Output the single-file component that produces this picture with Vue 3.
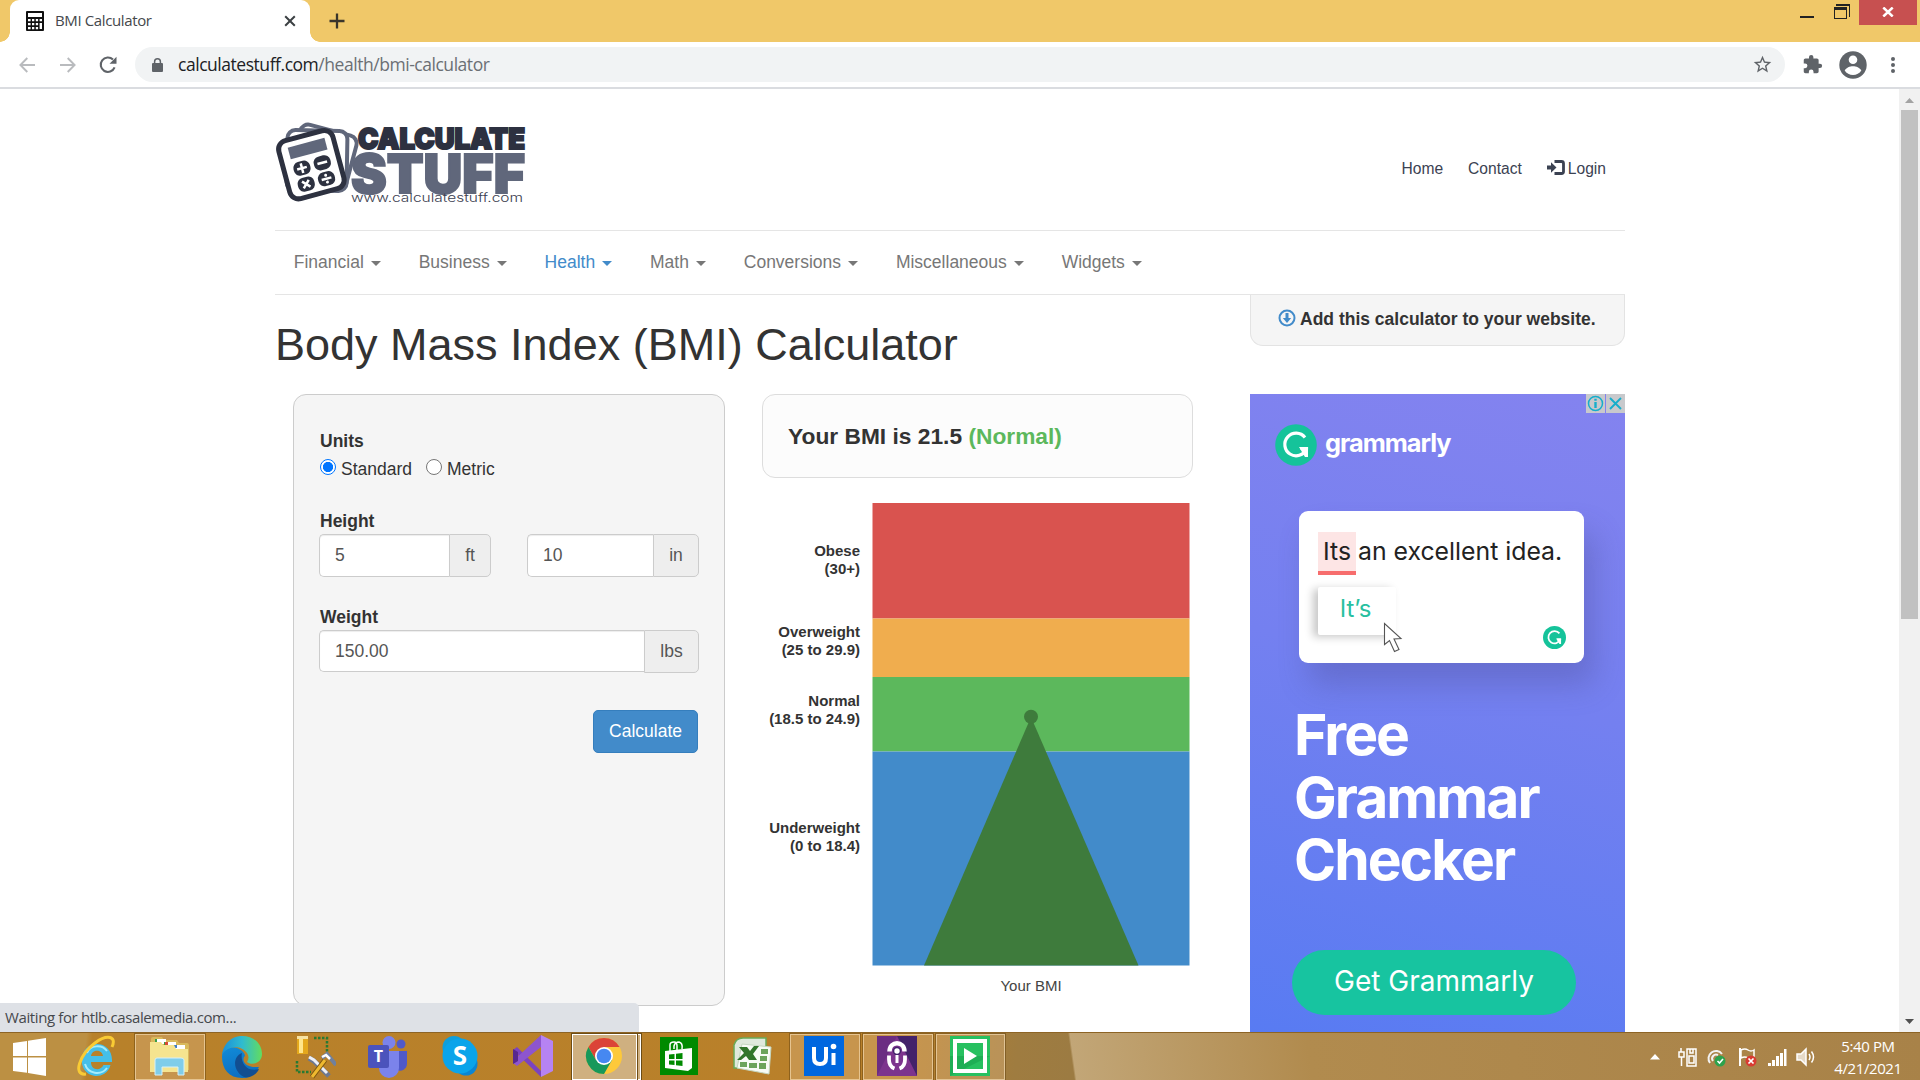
<script setup>
const menu = ['Financial', 'Business', 'Health', 'Math', 'Conversions', 'Miscellaneous', 'Widgets']
const bands = [
  { name: 'Obese', range: '(30+)', top: 13, height: 115.5, color: '#d9534f', label: 66 },
  { name: 'Overweight', range: '(25 to 29.9)', top: 128.5, height: 58.5, color: '#f0ad4e', label: 147 },
  { name: 'Normal', range: '(18.5 to 24.9)', top: 187, height: 74.5, color: '#5cb85c', label: 216 },
  { name: 'Underweight', range: '(0 to 18.4)', top: 261.5, height: 214, color: '#428bca', label: 343 },
]
</script>

<template>
  <div class="screen">
    <header class="tabstrip">
      <div class="tab">
        <svg class="favicon" width="18" height="20" viewBox="0 0 18 20">
          <rect width="18" height="20" rx="1" fill="#111" />
          <rect x="2" y="2" width="14" height="4" fill="#fff" />
          <g fill="#fff">
            <path d="M2 8h2.6v2.2H2zM6 8h2.3v2.2H6zM9.8 8h2.3v2.2H9.8zM13.6 8H16v2.2h-2.4zM2 12h2.6v2.2H2zM6 12h2.3v2.2H6zM9.8 12h2.3v2.2H9.8zM13.6 12H16v6h-2.4zM2 16h2.6v2.2H2zM6 16h2.3v2.2H6zM9.8 16h2.3v2.2H9.8z" />
          </g>
        </svg>
        <span class="tab-title">BMI Calculator</span>
        <svg class="tab-close" width="12" height="12" viewBox="0 0 12 12"><path d="M1.2 1.2l9.6 9.6M10.8 1.2L1.2 10.8" stroke="#3c4043" stroke-width="2" /></svg>
      </div>
      <svg class="newtab" width="16" height="16" viewBox="0 0 16 16"><path d="M8 .5v15M.5 8h15" stroke="#3a352b" stroke-width="2.3" /></svg>
      <div class="win">
        <svg width="14" height="18" viewBox="0 0 14 18"><path d="M0 16h14v2H0z" fill="#222" /></svg>
        <svg width="16" height="16" viewBox="0 0 16 16"><path d="M2 0h14v13h-1V2H2z" fill="#222" /><path d="M0 3h13v12H0zM1 6v8h11V6z" fill="#222" fill-rule="evenodd" /></svg>
        <div class="win-close"><svg width="12" height="10" viewBox="0 0 12 10"><path d="M1.3.5l9.4 9M10.7.5L1.3 9.5" stroke="#fff" stroke-width="2.5" /></svg></div>
      </div>
    </header>

    <div class="toolbar">
      <svg width="16" height="16" viewBox="0 0 16 16" fill="none" stroke="#b9bbbe" stroke-width="1.9"><path d="M16 8H1.5M8.3 1L1.4 8l6.9 7" /></svg>
      <svg class="fwd" width="16" height="16" viewBox="0 0 16 16" fill="none" stroke="#b9bbbe" stroke-width="1.9"><path d="M0 8h14.5M7.7 1l6.9 7-6.9 7" /></svg>
      <svg class="reload" width="18" height="18" viewBox="0 0 18 18"><path d="M15.6 11.4A7.2 7.2 0 1 1 14 3.6" fill="none" stroke="#5f6368" stroke-width="2.1" /><path d="M17.5.8v7h-7z" fill="#5f6368" /></svg>
      <div class="omnibox">
        <svg width="11" height="14" viewBox="0 0 11 14"><rect y="5" width="11" height="9" rx="1" fill="#5f6368" /><path d="M2.6 5.5V3.7a2.9 2.9 0 0 1 5.8 0v1.8" fill="none" stroke="#5f6368" stroke-width="1.5" /></svg>
        <span class="url">calculatestuff.com<em>/health/bmi-calculator</em></span>
        <svg class="star" width="21" height="21" viewBox="0 0 24 24"><path fill="#5f6368" d="M22 9.24l-7.19-.62L12 2 9.19 8.63 2 9.24l5.46 4.73L5.82 21 12 17.27 18.18 21l-1.63-7.03L22 9.24zM12 15.4l-3.76 2.27 1-4.28-3.32-2.88 4.38-.38L12 6.1l1.71 4.04 4.38.38-3.32 2.88 1 4.28L12 15.4z" /></svg>
      </div>
      <svg class="ext" width="21" height="21" viewBox="0 0 24 24"><path fill="#5f6368" d="M20.5 11H19V7c0-1.1-.9-2-2-2h-4V3.5a2.5 2.5 0 0 0-5 0V5H4c-1.1 0-2 .9-2 2v3.8h1.5a2.7 2.7 0 0 1 0 5.4H2V20c0 1.1.9 2 2 2h3.8v-1.5a2.7 2.7 0 0 1 5.4 0V22H17c1.1 0 2-.9 2-2v-4h1.500a2.500 2.500 0 0 0 0-5z" /></svg>
      <svg class="user" width="28" height="28" viewBox="0 0 28 28"><circle cx="14" cy="14" r="13.7" fill="#5f6368" /><circle cx="14" cy="8.800" r="4.300" fill="#fff" /><path d="M5.700 19.500C7 16.800 11 15.300 14 15.300s7 1.500 8.300 4.200C20.500 22.300 17.500 24 14 24s-6.500-1.700-8.300-4.500z" fill="#fff" /></svg>
      <svg class="dots" width="4" height="18" viewBox="0 0 4 18" fill="#5f6368"><circle cx="2" cy="3" r="2" /><circle cx="2" cy="9" r="2" /><circle cx="2" cy="15" r="2" /></svg>
    </div>

    <div class="viewport">
      <main class="page">
        <div class="brandbar">
          <svg class="logo" width="252" height="86" viewBox="0 0 252 86">
            <text x="83" y="29" class="logo-a" textLength="167" lengthAdjust="spacingAndGlyphs">CALCULATE</text>
            <text x="76" y="72.500" class="logo-b" textLength="174" lengthAdjust="spacingAndGlyphs">STUFF</text>
            <text x="76" y="81.500" class="logo-c" textLength="172" lengthAdjust="spacingAndGlyphs">www.calculatestuff.com</text>
            <g fill="#fff" stroke="#60677b" stroke-width="4">
              <rect x="19" y="9" width="58" height="56" rx="8" transform="rotate(15 47 38)" />
              <rect x="12" y="10.500" width="60" height="60" rx="8" transform="rotate(1 42 41)" />
            </g>
            <g transform="translate(1 -1) rotate(-15 36 46)">
              <rect x="7.500" y="15.500" width="56" height="60" rx="9" fill="#fff" stroke="#2d3140" stroke-width="5" />
              <rect x="17" y="23" width="38" height="12" fill="#60677b" />
              <g fill="#2d3140"><rect x="17" y="39.500" width="17" height="14" rx="6" /><rect x="38" y="39.500" width="17" height="14" rx="6" /><rect x="17" y="56" width="17" height="14" rx="6" /><rect x="38" y="56" width="17" height="14" rx="6" /></g>
              <path d="M25.500 41.500v10M20.500 46.500h10M41.500 46.500h10M22 59.500l7 7M29 59.500l-7 7M41.500 63h10" stroke="#fff" stroke-width="2.500" />
              <circle cx="46.500" cy="59.500" r="1.500" fill="#fff" /><circle cx="46.500" cy="66.500" r="1.500" fill="#fff" />
            </g>
          </svg>
          <nav class="links">
            <a>Home</a>
            <a>Contact</a>
            <a><svg width="18" height="16" viewBox="0 0 18 16"><path d="M0 5.500h4V2.200l5.500 5.300L4 12.800V9.500H0z" fill="#3b4252" /><path d="M7.500 1.500h7a2 2 0 0 1 2 2v8a2 2 0 0 1-2 2h-7" fill="none" stroke="#3b4252" stroke-width="2.800" /></svg>Login</a>
          </nav>
        </div>
        <nav class="menu">
          <a v-for="m in menu" :key="m" :class="{ active: m === 'Health' }">{{ m }} <i class="caret"></i></a>
        </nav>
        <div class="titlebar">
          <h1>Body Mass Index (BMI) Calculator</h1>
          <div class="embed">
            <svg width="18" height="18" viewBox="0 0 18 18"><circle cx="9" cy="9" r="7.500" fill="none" stroke="#428bca" stroke-width="2" /><path d="M7.500 4h3v5h2.700L9 14 4.800 9h2.700z" fill="#428bca" /></svg>
            <b>Add this calculator to your website.</b>
          </div>
        </div>
        <div class="columns">
          <section class="form">
            <b class="label">Units</b>
            <div class="radios">
              <i class="radio on"></i><span>Standard</span>
              <i class="radio second"></i><span>Metric</span>
            </div>
            <b class="label height-label">Height</b>
            <div class="fields">
              <div class="group"><div class="input">5</div><div class="addon ft">ft</div></div>
              <div class="group"><div class="input">10</div><div class="addon in">in</div></div>
            </div>
            <b class="label weight-label">Weight</b>
            <div class="group"><div class="input short">150.00</div><div class="addon lbs">lbs</div></div>
            <div class="actions"><button>Calculate</button></div>
          </section>
          <section class="result">
            <div class="verdict">Your BMI is 21.5 <span>(Normal)</span></div>
            <svg class="chart" width="432" height="510" viewBox="0 0 432 510">
              <g v-for="b in bands" :key="b.name">
                <rect x="110.500" :y="b.top" width="317" :height="b.height" :fill="b.color" />
                <text class="band" x="98" :y="b.label">{{ b.name }}</text>
                <text class="band" x="98" :y="b.label + 18">{{ b.range }}</text>
              </g>
              <path d="M269 227L376.500 475.500H162z" fill="#3e7b3c" />
              <circle cx="269" cy="226.700" r="7" fill="#3e7b3c" />
              <text class="axis" x="269" y="501">Your BMI</text>
            </svg>
          </section>
          <aside class="ad">
            <div class="ad-head">
              <svg width="42" height="42" viewBox="0 0 42 42"><circle cx="21" cy="21" r="20.800" fill="#15c39a" /><path d="M30 13.500A11.300 11.300 0 1 0 31.500 25V24.500h-6" fill="none" stroke="#fff" stroke-width="3.200" /><path d="M24 23h9v10h-3z" fill="#fff" /></svg>
              <span>grammarly</span>
              <div class="ad-ctl">
                <i><svg width="17" height="17" viewBox="0 0 17 17"><circle cx="8.500" cy="8.500" r="7" fill="none" stroke="#16aecb" stroke-width="1.500" /><path d="M7.300 7h2.400v6H7.300zM7.300 3.800h2.400v2H7.300z" fill="#16aecb" /></svg></i>
                <i><svg width="13" height="13" viewBox="0 0 13 13"><path d="M1 1l11 11M12 1L1 12" stroke="#16aecb" stroke-width="1.900" /></svg></i>
              </div>
            </div>
            <div class="ad-card">
              <p class="sentence"><span>Its</span> an excellent idea.</p>
              <div class="fix">It’s</div>
              <svg class="cursor" width="20" height="32" viewBox="0 0 20 32"><path d="M1.500 1.500v21l5-4 5 11 4.500-2-5-10.500 7-.5z" fill="#fff" stroke="#555" stroke-width="1.100" /></svg>
              <svg class="badge" width="23" height="23" viewBox="0 0 42 42"><circle cx="21" cy="21" r="21" fill="#15c39a" /><path d="M30 13.500A11.300 11.300 0 1 0 31.500 25V24.500h-6" fill="none" stroke="#fff" stroke-width="3.200" /><path d="M24 23h9v10h-3z" fill="#fff" /></svg>
            </div>
            <div class="ad-title">Free<br />Grammar<br />Checker</div>
            <div class="ad-cta">Get Grammarly</div>
          </aside>
        </div>
      </main>
      <div class="scrollbar">
        <svg width="9" height="5" viewBox="0 0 9 5"><path d="M0 5l4.500-5L9 5z" fill="#a3a3a3" /></svg>
        <div class="thumb"></div>
        <svg class="down" width="9" height="5" viewBox="0 0 9 5"><path d="M0 0l4.500 5L9 0z" fill="#505050" /></svg>
      </div>
      <div class="status">Waiting for htlb.casalemedia.com...</div>
    </div>

    <footer class="taskbar">
      <div class="start"><svg width="33" height="40" viewBox="0 0 33 40"><path d="M0 6l14-2v15H0zM15 3.800L33 1v18H15zM0 20.500h14v15.300L0 34zM15 20.500h18V39l-18-3z" fill="#fff" /></svg></div>
      <div class="task">
        <svg width="38" height="46" viewBox="0 0 38 46"><path d="M33.500 32A14.500 14.500 0 0 1 5 27C5 17 12 11 20 11s15 6 15 16v2H14c0 9 10 9 12.500 3zM14 23h12c-1-7-11-7-12 0z" fill="#45bfe9" fill-rule="evenodd" /><path d="M8 31a12.500 12.500 0 0 0 22 4M10 20c3-8 15-9 20-2" fill="none" stroke="#a5ebfc" stroke-width="2" /><path d="M9 41C-5 43 3 21 18 10 30 1 40 3 35 14" fill="none" stroke="#f9cb34" stroke-width="3" /></svg>
      </div>
      <div class="task open">
        <svg width="42" height="46" viewBox="0 0 42 46"><path d="M3 6q0-2 2-2h9l2 3h13l2 3h8q2 0 2 3v24H3z" fill="#d9b95c" /><path d="M7 6h11v5H7zM16 9h12v5H16zM26 12h11v6H26z" fill="#fff" /><path d="M7 6h2v3H7zM16 9h2v3h-2z" fill="#3a9d48" /><path d="M17 9h3v3h-3z" fill="#d84a35" /><path d="M26 12h3v3h-3z" fill="#3f7fc9" /><path d="M2 9h11l2 3h11l2 4h12v23H2z" fill="#f5e48f" /><path d="M7 27q0-2 2-2h24q3 0 3 2v15h-6v-8H14v8H7z" fill="#7fcdea" stroke="#d6f1f9" /></svg>
      </div>
      <div class="task">
        <svg width="42" height="46" viewBox="0 0 42 46">
          <defs>
            <linearGradient id="edgeTop" x1="0" x2="1"><stop offset="0" stop-color="#1b8fd8" /><stop offset=".5" stop-color="#2fbbd0" /><stop offset="1" stop-color="#63dc5e" /></linearGradient>
            <linearGradient id="edgeLow" y2="1" x2=".3"><stop offset="0" stop-color="#118bd9" /><stop offset="1" stop-color="#0c6fc0" /></linearGradient>
          </defs>
          <path d="M1 24C1 14 10 13 16 15c5 2 8 5 8 8-3 2-3 12 14 11-4 8-10 11-17 11C8 45 1 36 1 24z" fill="url(#edgeLow)" />
          <path d="M21 20c-12 5-7 22 4 24.500 6 0 11-4 13-8.500-13 4-19-8-17-16z" fill="#124e91" />
          <path d="M1 22C3 8 13 3 21 3c12 0 20 8 20 18 0 9-10 12-15 8 2-3 2-6 0-9-6-9-21-7-25 2z" fill="url(#edgeTop)" />
        </svg>
      </div>
      <div class="task">
        <svg width="42" height="46" viewBox="0 0 42 46"><path d="M3 3h11v18H3z" fill="#e4a81c" /><path d="M5 4h4v16H5z" fill="#ffe58a" /><path d="M3 3h11v3H3z" fill="#f7e2a2" /><path d="M20 5h13v15M3 28v11h14" fill="none" stroke="#287a32" stroke-width="2.500" stroke-dasharray="2.500 1.500" /><path d="M15 25l5 3 15 15" fill="none" stroke="#6d7890" stroke-width="5" /><path d="M15 24l5 3 13 13" fill="none" stroke="#eef0f5" stroke-width="3" /><path d="M31 27L18 44" stroke="#7a5610" stroke-width="5" /><path d="M31 27L18 44" stroke="#efb92f" stroke-width="3" /><path d="M28 25l5-4 9 11" fill="none" stroke="#70809c" stroke-width="4" /><path d="M28 24l4-2 4 4" fill="none" stroke="#fff" stroke-width="2.500" /></svg>
      </div>
      <div class="task">
        <svg width="40" height="46" viewBox="0 0 40 46"><circle cx="33" cy="11" r="4.500" fill="#5059c9" /><circle cx="21" cy="9.500" r="6.500" fill="#7b83eb" /><path d="M27 18h12v13a7 7 0 0 1-10 6z" fill="#5059c9" /><path d="M11 18h20v17a10 10 0 0 1-20 0z" fill="#7b83eb" /><rect y="12" width="21" height="23" rx="2" fill="#4b53bc" /><text x="10.500" y="29" text-anchor="middle" class="glyph" font-size="16">T</text></svg>
      </div>
      <div class="task">
        <svg width="38" height="46" viewBox="0 0 38 46"><circle cx="13" cy="14.500" r="11.500" fill="#0f9fdc" /><circle cx="25" cy="31" r="11.500" fill="#0a86d4" /><circle cx="19" cy="23" r="17.500" fill="#0aa4ea" /><text x="19" y="32" text-anchor="middle" class="glyph" font-size="26">S</text></svg>
      </div>
      <div class="task">
        <svg width="42" height="46" viewBox="0 0 42 46"><path d="M1 17l4-3 25 25-1 5z" fill="#7b43bf" /><path d="M29 2v12L5 33l-4-3v-2z" fill="#8d55cf" /><path d="M1 16l5 3v9l-5 3z" fill="#57288f" /><path d="M29 2l12 6v30l-12 6z" fill="#b683f2" /></svg>
      </div>
      <div class="task active-task">
        <svg width="38" height="38" viewBox="0 0 38 38"><circle cx="19" cy="19" r="18" fill="#fdc93a" /><path d="M3.400 10A18 18 0 0 1 34.600 10L19 10l-7.800 13.500z" fill="#db4437" /><path d="M3.400 10A18 18 0 0 0 19 37l8-14-16 0z" fill="#17985a" /><circle cx="19" cy="19" r="9" fill="#fff" /><circle cx="19" cy="19" r="7.300" fill="#4688f1" /></svg>
      </div>
      <div class="task">
        <svg width="38" height="38" viewBox="0 0 38 38"><rect width="38" height="38" fill="#008a00" /><path d="M5 14l27-3v20l-4 3-23-3z" fill="#fff" /><path d="M10 14V8q0-3 4-3 3 0 3 4v4M14 12V9q1-4 5-4 4 1 3 7" fill="none" stroke="#fff" stroke-width="1.500" /><path d="M9 17.500l5.500-.5v5H9zM16 16.800l6.500-.8v6H16zM9 23.500h5.500V28L9 27.500zM16 23.500h6.500v5.500l-6.500-.7z" fill="#008a00" /></svg>
      </div>
      <div class="task">
        <svg width="40" height="40" viewBox="0 0 40 40"><path d="M2 9q2-7 9-7h23v30H2z" fill="#dfe9dc" stroke="#69aa58" stroke-width="1.500" /><path d="M10 8l29 3-2 27-32-6z" fill="#f7fbf5" stroke="#c4d6bf" /><path d="M29 13h7v5h-7zM28 20h7v5h-7zM27 27h7v6h-7zM8 26h7v5H8zM17 27h8v5h-8z" fill="#6ca45b" /><path d="M7 11h8l3 4 4-5h5l-6 8 4 6h-8l-3-4-5 4H5l7-7z" fill="#31752a" /></svg>
      </div>
      <div class="task open"><svg width="40" height="40" viewBox="0 0 40 40"><rect width="40" height="40" fill="#0067df" /><path d="M10 11v11q0 6 6 6t6-6V11M29.500 17v12" fill="none" stroke="#fff" stroke-width="4" /><circle cx="29.500" cy="10.500" r="2.800" fill="#fff" /></svg></div>
      <div class="task open"><svg width="40" height="40" viewBox="0 0 40 40"><rect width="40" height="40" fill="#6b2d82" /><path d="M20 0h20v40z" fill="#43226a" /><path d="M0 40L20 0l20 40z" fill="#8a3b98" opacity=".55" /><path d="M12.500 15.500c0-11 15-11 15 0" fill="none" stroke="#fff" stroke-width="4.500" /><path d="M12 19.500v4q0 7 5.500 9M28 19.500v4q0 7-5.500 9" fill="none" stroke="#fff" stroke-width="3.800" /><circle cx="20" cy="15" r="4.200" fill="#43226a" /><circle cx="20" cy="15" r="2.700" fill="#fff" /><path d="M20 19v8" stroke="#fff" stroke-width="3" /></svg></div>
      <div class="task open"><svg width="40" height="40" viewBox="0 0 40 40"><rect width="40" height="40" fill="#27c060" /><path d="M0 40V20h40z" fill="#1eae55" /><rect x="5" y="5" width="30" height="30" fill="none" stroke="#fff" stroke-width="4" /><path d="M14 12l13 8-13 8z" fill="#fff" /></svg></div>

      <div class="tray">
        <svg width="10" height="6" viewBox="0 0 10 6"><path d="M0 5.500L5 0l5 5.500z" fill="#fff" /></svg>
        <svg class="t1" width="20" height="20" viewBox="0 0 20 20" fill="none" stroke="#fff" stroke-width="1.500"><path d="M3 1v4M1 5h5v5H1zM3.500 10v9M9 2h9v17H9zM12 2v4h3V2M11 9h5v7h-5z" /></svg>
        <svg width="20" height="20" viewBox="0 0 20 20"><path d="M3 16a7.500 7.500 0 1 1 12-9M6 14a4 4 0 0 1 5-6" fill="none" stroke="#f2f2f2" stroke-width="2" /><circle cx="13" cy="14" r="5.500" fill="#2ca24c" /><path d="M10.500 14l2 2 3.500-4" fill="none" stroke="#fff" stroke-width="1.600" /></svg>
        <svg width="20" height="20" viewBox="0 0 20 20"><path d="M3 1v18" stroke="#fff" stroke-width="2" /><path d="M4 3q4-2 7 0t6 0v8q-3 2-6 0t-7 0z" fill="none" stroke="#fff" stroke-width="1.500" /><circle cx="14" cy="14" r="5.500" fill="#d93b32" /><path d="M11.500 11.500l5 5M16.500 11.500l-5 5" stroke="#fff" stroke-width="1.700" /></svg>
        <svg width="20" height="20" viewBox="0 0 20 20" fill="#fff"><path d="M1 16h3v3H1zM5 13h3v6H5zM9 9h3v10H9zM13 6h3v13h-3zM17 2h2.500v17H17z" /></svg>
        <svg width="20" height="20" viewBox="0 0 20 20" fill="none" stroke="#fff" stroke-width="1.500"><path d="M1 7h4l5-5v16l-5-5H1z" fill="#fff" fill-opacity=".7" /><path d="M13 7q2 3 0 6M15.500 4.500q4 5.500 0 11" /></svg>
        <div class="clock"><span>5:40 PM</span><span>4/21/2021</span></div>
      </div>
    </footer>
  </div>
</template>

<style>
body { margin: 0; overflow: hidden; }
</style>

<style scoped>
* { box-sizing: border-box; }
svg { display: block; flex: none; }
.screen { width: 1920px; height: 1080px; display: flex; flex-direction: column; overflow: hidden; background: #fff; font-family: "Liberation Sans", Arial, sans-serif; font-size: 17.5px; color: #333; }

.tabstrip { height: 42px; flex: none; display: flex; background: #f0c869; padding-left: 10px; }
.tab { position: relative; width: 300px; height: 42px; background: #fff; border-radius: 9px 9px 0 0; display: flex; align-items: center; padding: 0 14px 0 16px; }
.tab::before, .tab::after { content: ""; position: absolute; bottom: 0; width: 10px; height: 10px; }
.tab::before { left: -10px; background: radial-gradient(circle at 0 0, transparent 9.5px, #fff 10px); }
.tab::after { right: -10px; background: radial-gradient(circle at 100% 0, transparent 9.5px, #fff 10px); }
.tab-title { margin: -2px 0 0 11px; font: 15px "Open Sans", "Noto Sans", sans-serif; letter-spacing: -.38px; color: #45484c; flex: 1; }
.newtab { margin: 13px 0 0 19px; }
.win { margin-left: auto; display: flex; padding-right: 3px; }
.win > svg:nth-child(1) { margin-right: 20px; }
.win > svg:nth-child(2) { margin: 4px 9px 0 0; }
.win-close { width: 58px; height: 25px; background: #c75050; display: flex; align-items: center; justify-content: center; }
.win-close svg { margin-top: -2px; }

.toolbar { height: 47px; flex: none; border-bottom: 2px solid #dadce0; display: flex; align-items: center; padding-left: 19px; }
.fwd { margin-left: 25px; }
.reload { margin-left: 23px; }
.omnibox { width: 1650px; height: 35px; margin-left: 18px; border-radius: 18px; background: #f1f3f4; display: flex; align-items: center; padding: 0 12px 0 17px; }
.url { margin: -1px 0 0 15px; flex: 1; font: 17.5px "Open Sans", "Noto Sans", sans-serif; letter-spacing: -.46px; color: #202124; }
.url em { font-style: normal; color: #6b6f74; }
.ext { margin-left: 17px; }
.user { margin-left: 16px; }
.dots { margin-left: 24px; }

.viewport { position: relative; height: 943px; flex: none; display: flex; overflow: hidden; }
.page { width: 1350px; margin-left: 275px; }
.brandbar { height: 142px; border-bottom: 1px solid #e5e5e5; display: flex; }
.logo { margin-top: 31px; overflow: visible; }
.logo-a { font: 900 29px Inter, sans-serif; fill: #2d3140; stroke: #2d3140; stroke-width: 2px; }
.logo-b { font: 900 54px Inter, sans-serif; fill: #60677b; stroke: #60677b; stroke-width: 2px; }
.logo-c { font: 300 12px Inter, sans-serif; fill: #3b4050; }
.links { margin-left: auto; display: flex; gap: 25px; padding: 70px 19px 0 0; font-size: 15.600px; line-height: 20px; color: #3b4252; }
.links a { display: flex; }
.links svg { margin: 1px 3px 0 0; }
.menu { height: 64px; border-bottom: 1px solid #e5e5e5; display: flex; color: #777; line-height: 62px; }
.menu a { height: 61px; padding: 0 18.750px; display: flex; align-items: center; white-space: pre; }
.menu .active { color: #428bca; }
.caret { margin: 3px 0 0 2.500px; border: 5px solid transparent; border-top-color: currentColor; border-bottom: 0; }
.titlebar { display: flex; height: 99px; }
h1 { margin: 25px 0 0; font-size: 45px; font-weight: 400; line-height: 50px; flex: 1; white-space: nowrap; }
.embed { width: 375px; height: 51px; background: #f5f5f5; border: 1px solid #e3e3e3; border-top: 0; border-radius: 0 0 13px 13px; display: flex; padding: 14px 0 0 27px; line-height: 20px; }
.embed b { margin-left: 4px; }
.columns { display: flex; }

.form { width: 432px; height: 612px; margin-left: 18px; border: 1px solid #ccc; border-radius: 13px; background: #f5f5f5; padding: 34px 25px 0; flex: none; }
.label { display: block; line-height: 25px; padding-left: 1px; }
.radios { display: flex; align-items: center; height: 20px; margin-top: 5px; }
.radio { width: 16px; height: 16px; border-radius: 50%; border: 1px solid #767676; background: #fff; margin: -4px 5px 0 1px; }
.radio.on { border: 1.500px solid #0075ff; background: radial-gradient(circle, #0075ff 4.800px, #fff 5.400px); }
.radio.second { margin-left: 14px; }
.height-label { margin-top: 30px; }
.fields { display: flex; justify-content: space-between; }
.fields .group { width: 172px; }
.group { display: flex; height: 43px; color: #555; line-height: 40px; width: 380px; }
.input { flex: 1; background: #fff; border: 1px solid #ccc; border-right: 0; border-radius: 5px 0 0 5px; padding-left: 15px; box-shadow: inset 0 1px 1px rgba(0,0,0,.075); }
.short { height: 42px; }
.addon { background: #eee; border: 1px solid #ccc; border-radius: 0 5px 5px 0; text-align: center; }
.ft { width: 42px; } .in { width: 46px; } .lbs { width: 55px; }
.weight-label { margin-top: 28px; }
.actions { display: flex; justify-content: flex-end; margin-top: 37px; padding-right: 1px; }
button { width: 105px; height: 43px; border: 1px solid #357ebd; border-radius: 5px; background: #428bca; color: #fff; font: 17.5px "Liberation Sans", Arial, sans-serif; padding: 0 0 1px; }

.result { width: 431px; margin-left: 37px; flex: none; }
.verdict { height: 84px; border: 1px solid #ddd; border-radius: 13px; background: #fcfcfc; padding: 0 25px; line-height: 82px; font-size: 22.750px; font-weight: 700; }
.verdict span { color: #5cb85c; }
.chart { margin-top: 12px; }
.band { font: 700 15px "Liberation Sans", Arial, sans-serif; fill: #333; text-anchor: end; }
.axis { font: 15px "Liberation Sans", Arial, sans-serif; fill: #444; text-anchor: middle; }

.ad { width: 375px; height: 640px; flex: none; margin-left: 57px; background: linear-gradient(195deg, #8483ef, #7480f0 45%, #587bf2); color: #fff; font-family: Inter, sans-serif; }
.ad-head { position: relative; height: 117px; display: flex; padding: 30px 0 0 25px; }
.ad-head > span { margin: 2px 0 0 8px; font: 700 25.300px/34px Inter, sans-serif; letter-spacing: -1px; }
.ad-ctl { position: absolute; top: 0; right: 0; display: flex; gap: 1px; }
.ad-ctl i { width: 19px; height: 19px; background: #c8c9cc; display: flex; align-items: center; justify-content: center; }
.ad-card { position: relative; width: 285px; height: 152px; margin-left: 49px; background: #fff; border-radius: 9px; box-shadow: 10px 22px 30px rgba(70,70,140,.32); padding: 21px 0 0 19px; }
.sentence { margin: 0; color: #222; font-size: 24.800px; line-height: 39px; white-space: nowrap; }
.sentence span { display: inline-block; height: 43px; padding: 0 5px 0 5px; margin-right: -5px; background: #fde5e5; border-bottom: 4px solid #f76d6d; }
.fix { width: 78px; height: 48px; margin-top: 12px; border-radius: 2px; background: #fff; color: #28bfa0; font-size: 24px; line-height: 44px; padding-right: 3px; text-align: center; box-shadow: -5px 2px 9px rgba(0,0,0,.22); }
.cursor { position: absolute; left: 84px; top: 111px; }
.badge { position: absolute; right: 18px; bottom: 14px; }
.ad-title { margin: 41px 0 0 44px; font-size: 57px; font-weight: 700; line-height: 62.500px; letter-spacing: -2px; }
.ad-cta { width: 284px; height: 65px; margin: 58px 0 0 42px; border-radius: 33px; background: #17c4a0; text-align: center; font-size: 28px; line-height: 62px; }

.scrollbar { width: 21px; margin-left: auto; background: #f1f1f1; display: flex; flex-direction: column; align-items: center; padding-top: 9px; }
.thumb { width: 17px; height: 509px; margin-top: 7px; background: #c1c1c1; }
.down { margin: auto 0 8px; }
.status { position: absolute; left: 0; bottom: 0; width: 639px; height: 29px; background: #dee1e6; border-radius: 0 5px 0 0; padding-left: 5px; font: 15px/28px "Open Sans", "Noto Sans", sans-serif; letter-spacing: -.38px; color: #45484c; }

.taskbar { height: 48px; flex: none; display: flex; align-items: center; border-top: 1px solid #8d6425; background: linear-gradient(82deg, transparent 1064px, #c2a677 1066px, #b18b4e 1300px, #a88248 100%), linear-gradient(98deg, #bc9043 86px, #b8812a 92px, #b9802a 900px, #9f7c40 1010px, #9c7b42 1066px); }
.start { width: 58px; display: flex; justify-content: center; margin-right: 4px; padding-left: 1px; }
.task { width: 69.800px; height: 46px; margin-right: 3px; display: flex; align-items: center; justify-content: center; flex: none; }
.task svg { margin: -1px 1px 0 0; }
.open { background: rgba(220,180,130,.4); border: 1px solid rgba(255,235,200,.55); outline: 1px solid rgba(90,60,10,.45); outline-offset: 0; }
.active-task { position: relative; background: #cfb080; border: 1px solid #fff; outline: 1px solid #6d4c14; padding-right: 4px; }
.active-task::after { content: ""; position: absolute; right: 3px; top: -1px; bottom: -1px; width: 1px; background: #fff; box-shadow: 1px 0 #6d4c14; }
.glyph { font-family: "Open Sans", sans-serif; font-weight: 700; fill: #fff; }
.tray { margin-left: auto; display: flex; align-items: center; gap: 9.700px; padding-right: 16px; }
.t1 { margin-left: 8px; }
.clock { display: flex; flex-direction: column; align-items: center; width: 72px; margin-left: 6px; color: #fff; font: 15px/22px "Open Sans", "Noto Sans", sans-serif; letter-spacing: -.4px; white-space: nowrap; }
</style>
